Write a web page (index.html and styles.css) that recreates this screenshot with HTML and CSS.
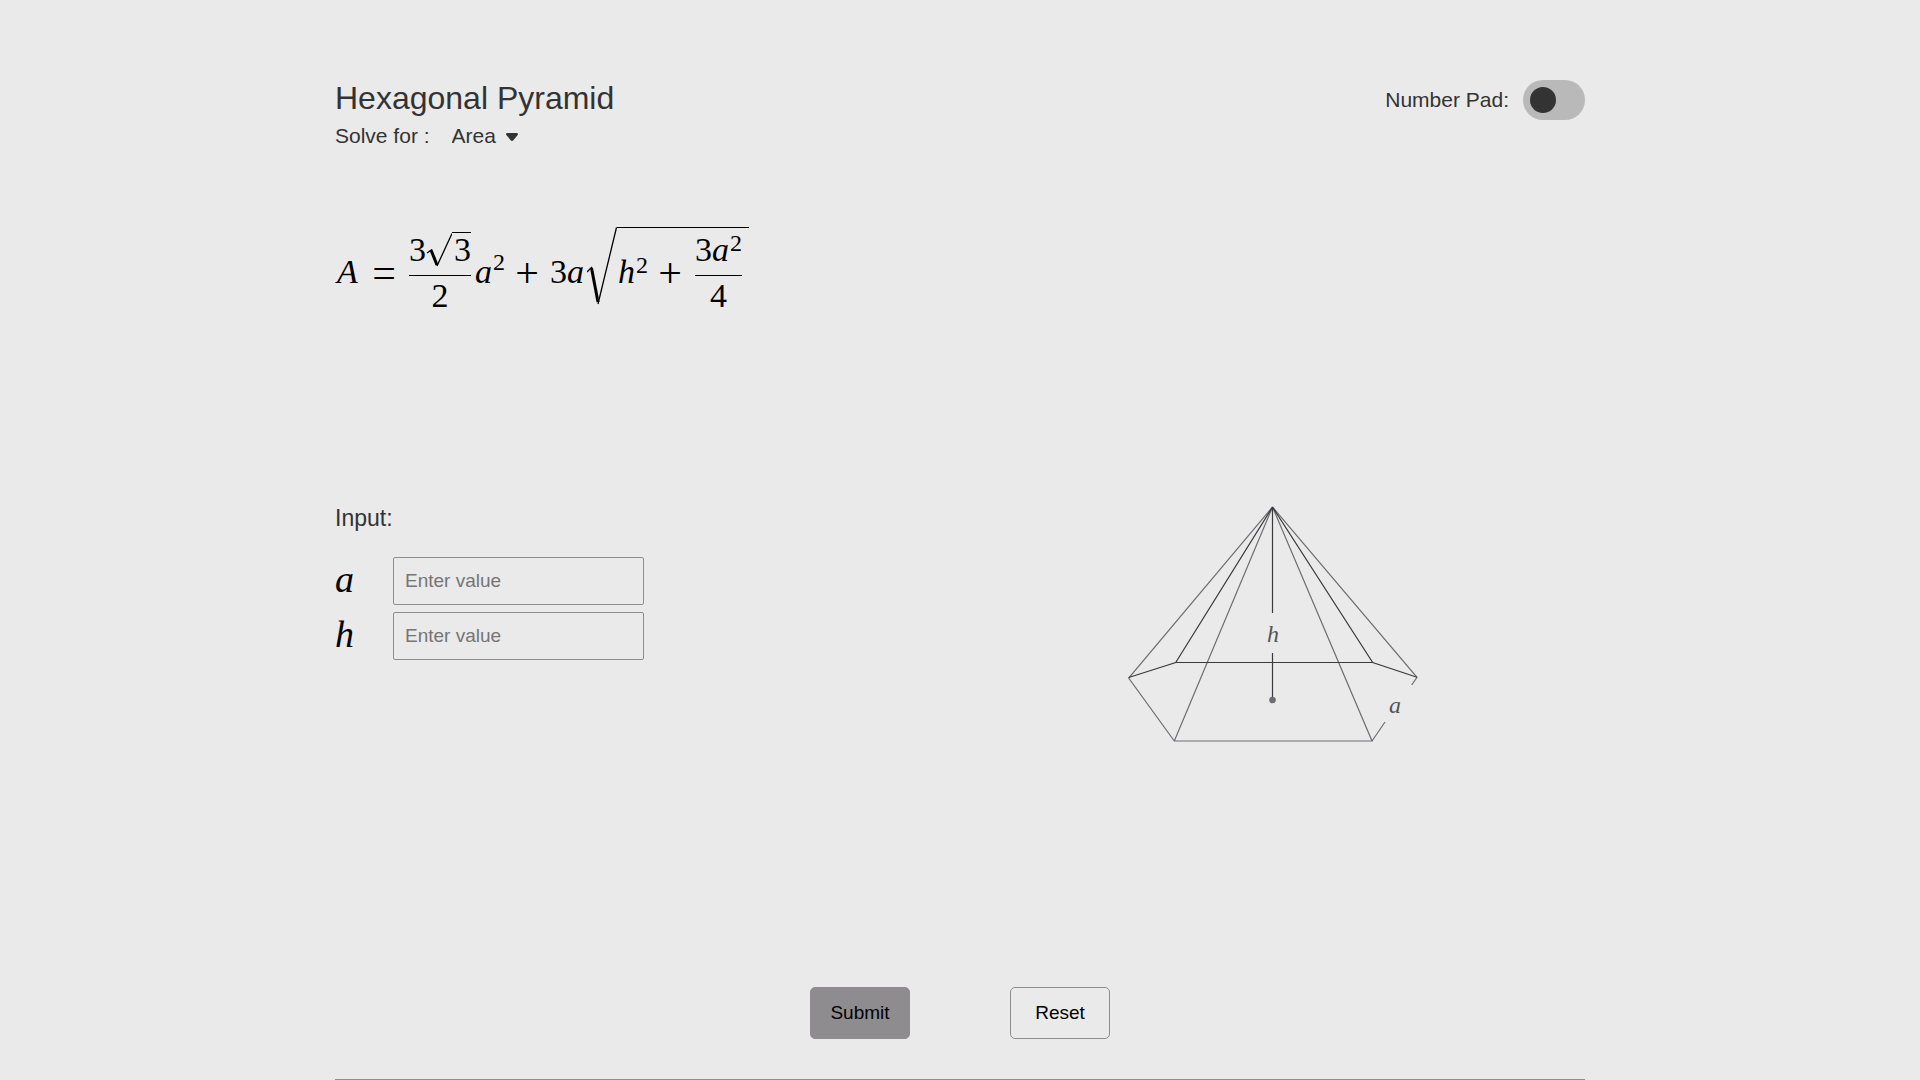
FILE: index.html
```
<!DOCTYPE html>
<html lang="en">
<head>
<meta charset="utf-8">
<meta name="viewport" content="width=device-width, initial-scale=1">
<title>Hexagonal Pyramid</title>
<link rel="stylesheet" href="styles.css">
</head>
<body>
<form class="page">
  <header class="header">
    <div class="heading">
      <h1 class="title">Hexagonal Pyramid</h1>
      <div class="solve">
        <label for="target">Solve for :</label>
        <div class="picker">
          <select id="target" class="picker-select"><option>Area</option></select>
          <svg class="caret" viewBox="0 0 12 8" aria-hidden="true"><path d="M1.500 0h9c1.300 0 1.900 1.200 1 2.200L7.300 7.200c-.7.900-1.900.9-2.600 0L.5 2.200C-.4 1.200.2 0 1.500 0z"/></svg>
        </div>
      </div>
    </div>
    <label class="pad">Number Pad: <input class="toggle" type="checkbox"></label>
  </header>

  <div class="formula">
    <var class="lead">A</var><span class="op">=</span>
    <span class="frac">
      <span class="num"><span>3</span><svg class="root-small" viewBox="0 0 26 34"><path class="hair" d="M1 20l5-3.500M11 33L26 .5"/><path class="thick" d="M5 17L11 32"/></svg><span class="bar">3</span></span>
      <span class="den">2</span>
    </span>
    <span class="term"><var>a</var><sup class="high">2</sup></span>
    <span class="op">+</span>
    <span class="term">3<var>a</var></span>
    <span class="root">
      <svg class="root-large" viewBox="0 0 30 78"><path class="hair" d="M0 45l5-5M11 77L29.500 .5"/><path class="thick" d="M4.500 41L11 75"/></svg>
      <span class="radicand">
        <span class="term"><var>h</var><sup>2</sup></span>
        <span class="op">+</span>
        <span class="frac">
          <span class="num"><span>3<var>a</var><sup>2</sup></span></span>
          <span class="den">4</span>
        </span>
      </span>
    </span>
  </div>

  <div class="work">
    <section class="inputs">
      <h2 class="subtitle">Input:</h2>
      <div class="row"><label for="side"><var>a</var></label><input id="side" class="field" type="text" placeholder="Enter value"></div>
      <div class="row"><label for="height"><var>h</var></label><input id="height" class="field" type="text" placeholder="Enter value"></div>
    </section>
    <svg class="diagram" viewBox="0 0 321 242" role="img" aria-label="Hexagonal pyramid with height h and side a">
      <path class="front" d="M160.500 3L16.700 174L62.300 237H260L160.500 3L305 173.300L299.700 181M260 237L273 218M160.500 3L62.300 237"/>
      <path class="back" d="M160.500 3L63.700 158.500L16.700 173.500M160.500 3L260.700 158.500L305 173.300M63.700 158.500H260.700M160.500 3V109M160.500 149V196"/>
      <circle class="dot" cx="160.500" cy="196" r="3.300"/>
      <text x="155" y="138">h</text>
      <text x="277" y="209">a</text>
    </svg>
  </div>

  <footer class="actions">
    <button class="button filled" type="submit">Submit</button>
    <button class="button" type="reset">Reset</button>
  </footer>
</form>
</body>
</html>
```
FILE: styles.css
```
* { box-sizing: border-box; }
body {
  margin: 0;
  background: #eaeaea;
  color: #333;
  font-family: "Liberation Sans", Arial, sans-serif;
}
.page {
  display: flex;
  flex-direction: column;
  max-width: 1250px;
  min-height: 100vh;
  margin: 0 auto;
  padding: 80px 0 40px;
  border-bottom: 1px solid #8e8e8e;
}
.header { display: flex; justify-content: space-between; align-items: flex-start; }
.title { margin: 0 0 8px; font-size: 32px; line-height: 36px; font-weight: 400; }
.solve { display: flex; gap: 22px; font-size: 21px; line-height: 24px; }
.picker { position: relative; }
.picker-select {
  appearance: none;
  display: block;
  padding: 0 21px 0 0;
  border: 0;
  background: none;
  color: inherit;
  font: inherit;
}
.caret {
  position: absolute;
  top: 9px;
  right: 0;
  width: 12px;
  height: 8px;
  fill: #333;
  pointer-events: none;
}
.pad { display: flex; align-items: center; gap: 14px; font-size: 21px; }
.toggle {
  appearance: none;
  display: flex;
  align-items: center;
  width: 62px;
  height: 40px;
  margin: 0;
  padding: 0 7px;
  border-radius: 20px;
  background: #b9b9b9;
}
.toggle::before { content: ""; width: 26px; height: 26px; border-radius: 50%; background: #333; }
.toggle:checked { justify-content: flex-end; }

.formula {
  display: flex;
  align-items: center;
  margin-top: 79px;
  color: #000;
  font-family: "Liberation Serif", "Times New Roman", serif;
  font-size: 34px;
  line-height: 34px;
}
.formula sup { margin-left: 1px; font-size: 24px; line-height: 0; vertical-align: 10px; }
.formula .high { vertical-align: 13px; }
.lead { width: 27px; padding: 0 0 6px 2px; }
.term { padding: 0 0 6px 1px; }
.op { width: 44px; padding-bottom: 4px; text-align: center; font-size: 42px; }
.frac { display: flex; flex-direction: column; margin: 0 3px; }
.num {
  display: flex;
  align-items: flex-end;
  height: 48px;
  padding-bottom: 8px;
  border-bottom: 1px solid #000;
}
.den { height: 46px; padding-top: 3px; text-align: center; }
.bar { padding-left: 2px; border-top: 1px solid #000; }
.root { display: flex; align-items: flex-start; margin-left: 3px; }
.radicand { display: flex; align-items: center; padding-right: 4px; border-top: 1px solid #000; }
.root-small { width: 26px; height: 34px; }
.root-large { width: 30px; height: 78px; }
.hair { fill: none; stroke: #000; stroke-width: 1.300; }
.thick { fill: none; stroke: #000; stroke-width: 3; }

.work { display: grid; grid-template-columns: 1fr 1fr; margin-top: 182px; }
.subtitle { margin: 0 0 25px; font-size: 23px; line-height: 28px; font-weight: 400; }
.row { display: flex; margin-bottom: 7px; }
.row label {
  width: 58px;
  color: #000;
  font: 38px/44px "Liberation Serif", "Times New Roman", serif;
}
.field {
  width: 251px;
  height: 48px;
  padding: 0 11px;
  border: 1px solid #8e8e8e;
  border-radius: 2px;
  background: transparent;
  color: #333;
  font: inherit;
  font-size: 19px;
}
.field::placeholder { color: #757575; }
.diagram { width: 321px; justify-self: center; }
.front, .back { fill: none; stroke: #6d6e71; stroke-width: 1.200; }
.back { stroke: #3b3b3d; }
.dot { fill: #6d6e71; }
.diagram text { fill: #555; font: italic 24px "Liberation Serif", "Times New Roman", serif; }

.actions { display: flex; justify-content: center; gap: 100px; margin-top: auto; }
.button {
  width: 100px;
  height: 52px;
  padding: 0;
  border: 1px solid #8e8e8e;
  border-radius: 5px;
  background: transparent;
  color: #000;
  font: inherit;
  font-size: 19px;
}
.filled { background: #8f8c8f; border-color: #8f8c8f; }
```
